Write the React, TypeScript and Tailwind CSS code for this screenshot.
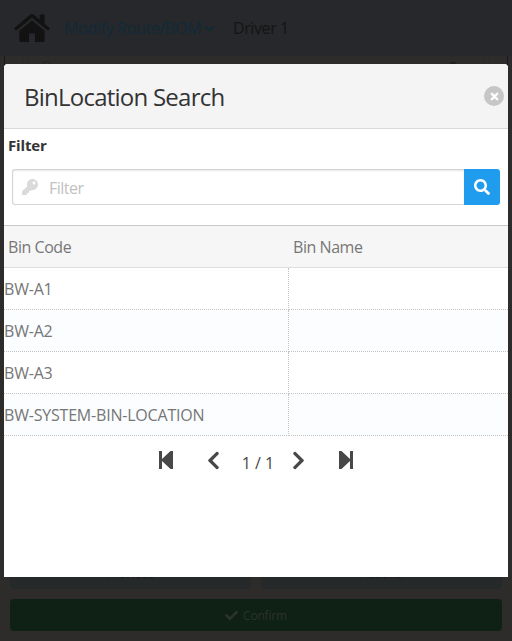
import React from 'react';
import { FaKey, FaSearch, FaChevronDown, FaCheck, FaTimes, FaChevronLeft, FaChevronRight } from 'react-icons/fa';

const rows = ['BW-A1', 'BW-A2', 'BW-A3', 'BW-SYSTEM-BIN-LOCATION'];

function HomeIcon() {
  return (
    <svg viewBox="0 0 36 28" className="h-7 w-9 text-[#121212]" fill="currentColor">
      <path d="M16 .8Q18-.8 20 .8L25.600 5.500V.6H30.600V9.700L36 14.200 34 16.800 18 3.800 2 16.800 0 14.200Z" />
      <path d="M18 6.400 30.600 16.700V26.500Q30.600 28 29.100 28H21V19.500H15V28H6.900Q5.400 28 5.400 26.500V16.700Z" />
    </svg>
  );
}

function EdgeIcon({ className }: { className: string }) {
  return (
    <svg viewBox="0 0 14 18" className={className} fill="currentColor">
      <path d="M0 0H3V8L11.500 0H14V18H11.500L3 10V18H0Z" />
    </svg>
  );
}

function Backdrop() {
  return (
    <div className="flex h-full flex-col">
      <header className="flex h-14 shrink-0 items-center bg-[#27282b] pl-[14px] text-base text-[#141414]">
        <HomeIcon />
        <span className="ml-[14px] w-[139px] whitespace-nowrap tracking-[-0.32px] text-[#102a38]">Modify Route/BOM</span>
        <FaChevronDown className="ml-[1px] h-[11px] w-[11px] text-[#102a38]" />
        <span className="ml-[18px] whitespace-nowrap tracking-[-0.4px]">Driver 1</span>
      </header>
      <div className="mx-1 flex h-5 shrink-0 justify-between border-x border-[#101b27]">
        <div className="ml-[18px] flex border-l border-[#292a2a] pl-1">
          <div className="border-l border-[#292a2a] pl-3 text-sm leading-5 text-[#242424]">Q</div>
        </div>
        <div className="mr-[18px] flex border-r border-[#292a2a] pr-1">
          <div className="border-r border-[#292a2a] pr-[26px] text-sm leading-[22px] text-[#171717]">0</div>
        </div>
      </div>
      <div className="flex-1" />
      <div className="mx-[10px] grid shrink-0 grid-cols-2 gap-[10px] text-center text-xs leading-5 text-[#181a1b]">
        <div className="h-9 rounded bg-[#26292a] pt-[11px]">Previous</div>
        <div className="h-9 rounded bg-[#26292a] pt-[11px]">Actions</div>
      </div>
      <div className="mx-[10px] mb-[10px] mt-[10px] flex h-8 shrink-0 items-center justify-center gap-[5px] rounded bg-[#0f2114] text-xs text-[#2b332d]">
        <FaCheck className="h-[13px] w-[13px]" />
        <span className="pt-[2px] tracking-[-0.2px]">Confirm</span>
      </div>
    </div>
  );
}

export default function App() {
  return (
    <div className="relative h-[641px] w-[512px] overflow-hidden bg-[#2d2c2b] font-['Open_Sans','Noto_Sans',sans-serif]">
      <Backdrop />
      <section className="absolute left-1 top-16 flex h-[513px] w-[504px] flex-col overflow-hidden rounded-t bg-white text-base text-[#767676]">
        <header className="flex h-[65px] shrink-0 items-center justify-between border-b border-[#d9d9d9] bg-[#f4f4f4] pl-5 pr-1">
          <h1 className="whitespace-nowrap pt-px text-2xl tracking-[-0.76px] text-[#333]">BinLocation Search</h1>
          <button className="flex h-5 w-5 items-center justify-center rounded-full bg-[#c6c6c6] text-white">
            <FaTimes className="h-[11px] w-[11px]" stroke="currentColor" strokeWidth={24} />
          </button>
        </header>
        <div className="h-24 shrink-0 px-1">
          <label className="block h-10 pt-1 text-[15px] font-bold leading-6 tracking-[-0.15px] text-[#333]">Filter</label>
          <div className="mx-1 flex h-9">
            <div className="flex flex-1 items-center rounded-l-[3px] border border-r-0 border-[#d5d5d5] pl-[9px] text-[#c1c1c1] shadow-[inset_0_1px_2px_rgba(0,0,0,0.1)]">
              <FaKey className="h-4 w-4 text-[#dadada]" />
              <span className="ml-[11px] pt-[2px] tracking-[-0.5px]">Filter</span>
            </div>
            <button className="flex w-9 items-center justify-center rounded-r-[3px] bg-[#209cee] text-white">
              <FaSearch className="h-4 w-4" />
            </button>
          </div>
        </div>
        <div className="grid h-[43px] shrink-0 grid-cols-[285px_1fr] items-center border-b border-t border-b-[#dedede] border-t-[#c8c8c8] bg-[#f6f6f6] pt-px tracking-[-0.45px]">
          <span className="pl-1">Bin Code</span>
          <span className="pl-1">Bin Name</span>
        </div>
        {rows.map((row) => (
          <div key={row} className="grid h-[42px] shrink-0 grid-cols-[285px_1fr] tracking-[-0.2px] even:bg-white odd:bg-[#fbfdff]">
            <div className="flex items-center border-b border-r border-dotted border-[#c4c4c4] pt-px">{row}</div>
            <div className="border-b border-dotted border-[#c4c4c4]" />
          </div>
        ))}
        <nav className="flex h-12 shrink-0 items-center pl-[155px] text-[#484848]">
          <EdgeIcon className="h-[18px] w-[14px]" />
          <FaChevronLeft className="ml-[34px] h-[21px] w-[13px]" />
          <span className="ml-[21px] w-[34px] whitespace-nowrap pt-[5px] text-center text-base">1 / 1</span>
          <FaChevronRight className="ml-[17px] h-[21px] w-[13px]" />
          <EdgeIcon className="ml-[34px] h-[18px] w-[14px] rotate-180" />
        </nav>
      </section>
    </div>
  );
}
